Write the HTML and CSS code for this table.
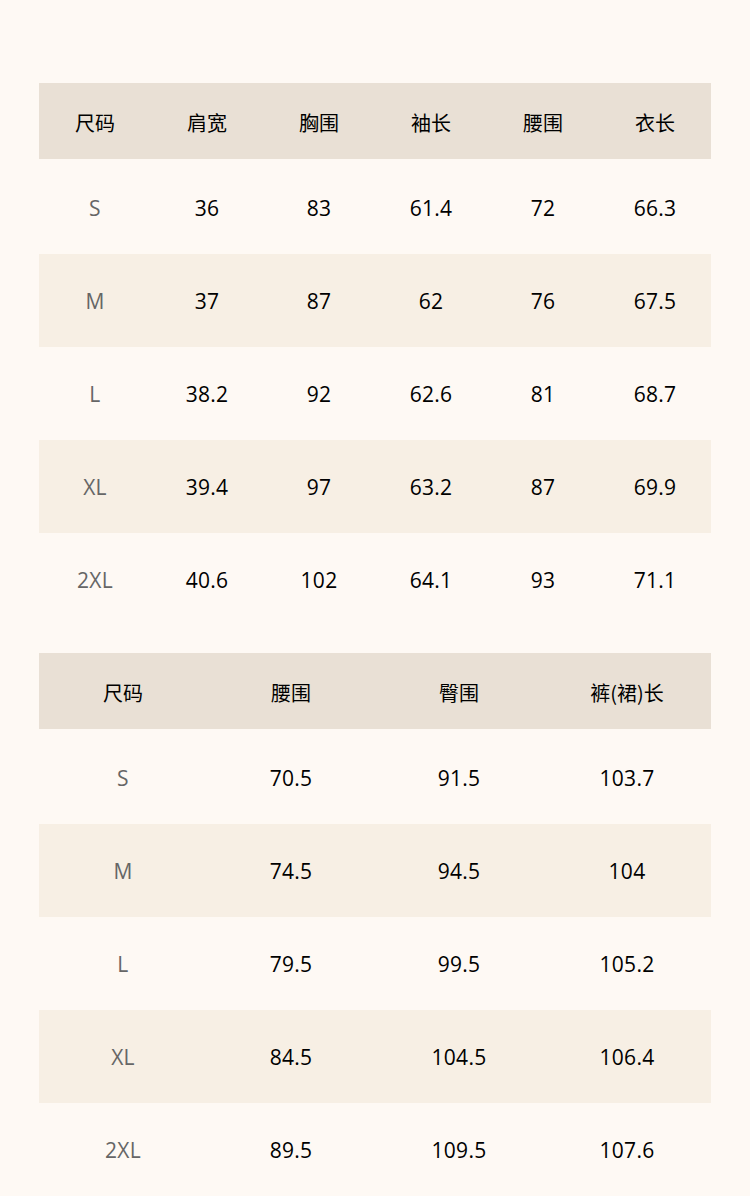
FILE: index.html
```html
<!DOCTYPE html>
<html lang="zh-CN">
<head>
<meta charset="utf-8">
<link rel="stylesheet" href="styles.css">
</head>
<body>
<div class="page">
  <div class="table t6">
    <div class="row head"><span>尺码</span><span>肩宽</span><span>胸围</span><span>袖长</span><span>腰围</span><span>衣长</span></div>
    <div class="row first"><span class="sz">S</span><span>36</span><span>83</span><span>61.4</span><span>72</span><span>66.3</span></div>
    <div class="row alt"><span class="sz">M</span><span>37</span><span>87</span><span>62</span><span>76</span><span>67.5</span></div>
    <div class="row"><span class="sz">L</span><span>38.2</span><span>92</span><span>62.6</span><span>81</span><span>68.7</span></div>
    <div class="row alt"><span class="sz">XL</span><span>39.4</span><span>97</span><span>63.2</span><span>87</span><span>69.9</span></div>
    <div class="row"><span class="sz">2XL</span><span>40.6</span><span>102</span><span>64.1</span><span>93</span><span>71.1</span></div>
  </div>
  <div class="table t4">
    <div class="row head"><span>尺码</span><span>腰围</span><span>臀围</span><span>裤(裙)长</span></div>
    <div class="row first"><span class="sz">S</span><span>70.5</span><span>91.5</span><span>103.7</span></div>
    <div class="row alt"><span class="sz">M</span><span>74.5</span><span>94.5</span><span>104</span></div>
    <div class="row"><span class="sz">L</span><span>79.5</span><span>99.5</span><span>105.2</span></div>
    <div class="row alt"><span class="sz">XL</span><span>84.5</span><span>104.5</span><span>106.4</span></div>
    <div class="row"><span class="sz">2XL</span><span>89.5</span><span>109.5</span><span>107.6</span></div>
  </div>
</div>
</body>
</html>
```
FILE: styles.css
```css
html, body {
  margin: 0;
  padding: 0;
  background: #fef9f4;
}
body {
  font-family: "Open Sans", "Noto Sans CJK SC", sans-serif;
  font-size: 21px;
  color: #000;
}
.page {
  width: 750px;
  height: 1196px;
  overflow: hidden;
  padding: 83px 39px 0;
  box-sizing: border-box;
  display: flex;
  flex-direction: column;
  gap: 27px;
}
.table {
  display: flex;
  flex-direction: column;
}
.row {
  display: grid;
  height: 93px;
  align-items: center;
  justify-items: center;
}
.t6 .row { grid-template-columns: repeat(6, 1fr); }
.t4 .row { grid-template-columns: repeat(4, 1fr); }
.row span {
  line-height: 1;
  padding-top: 2px;
  letter-spacing: 0.3px;
}
.row.first span { padding-top: 3px; }
.row.head {
  height: 76px;
  background: #e9e0d5;
  color: #000;
  font-family: "Noto Sans CJK SC", sans-serif;
  font-size: 20px;
}
.row.head span { padding-top: 4px; letter-spacing: 0; }
.row.first { height: 95px; }
.row.alt { background: #f7efe4; }
.sz { color: #666; }
```
